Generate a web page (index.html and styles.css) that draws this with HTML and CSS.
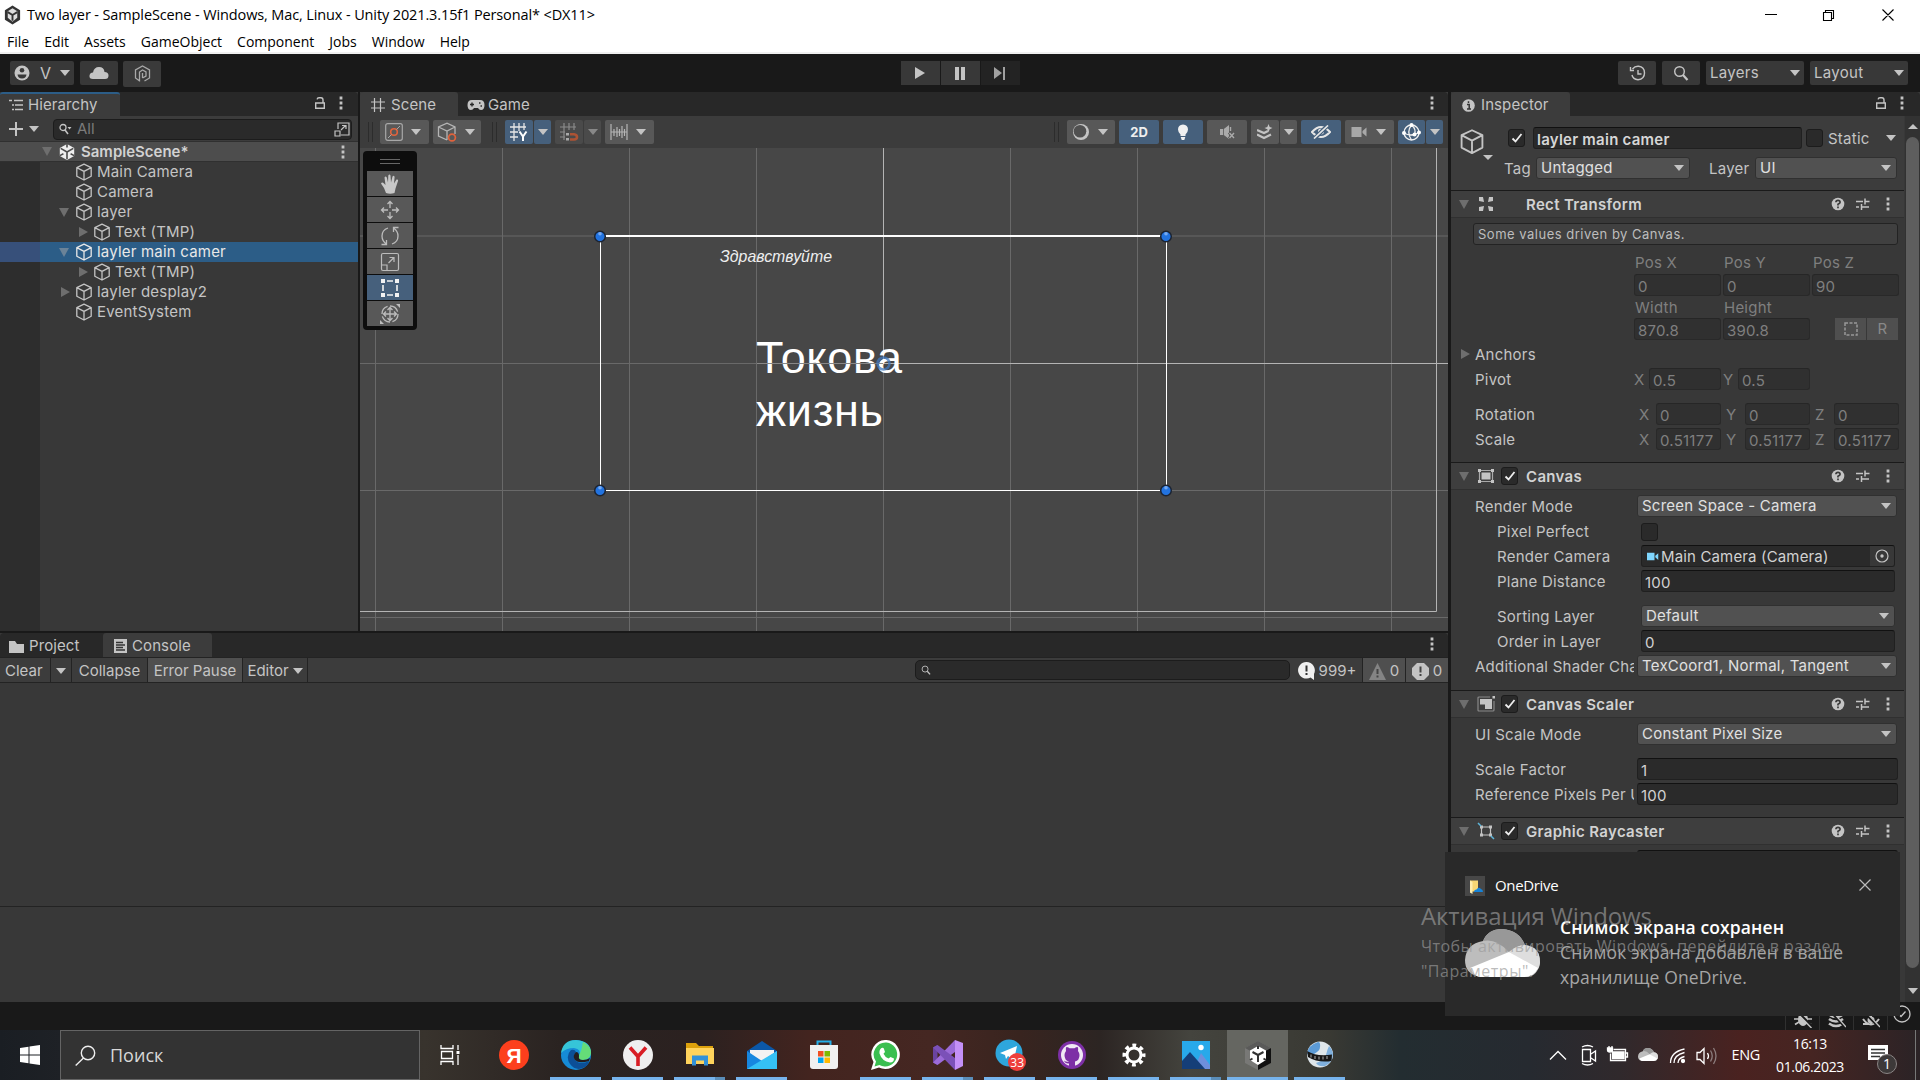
FILE: index.html
```html
<!DOCTYPE html>
<html lang="ru">
<head>
<meta charset="utf-8">
<title>Two layer - SampleScene</title>
<link rel="stylesheet" href="styles.css">
</head>
<body>
<svg class="defs" width="0" height="0">
  <symbol id="cube" viewBox="0 0 18 18"><path d="M9 1.2 16.2 4.6V13.2L9 17 1.8 13.2V4.6ZM1.8 4.6 9 8.4 16.2 4.6M9 8.4V17" fill="none" stroke="currentColor" stroke-width="1.3" stroke-linejoin="round"/></symbol>
  <symbol id="kebab" viewBox="0 0 4 14"><path d="M.6.6h2.8v2.8H.6zM.6 5.6h2.8v2.8H.6zM.6 10.6h2.8v2.8H.6z" fill="currentColor"/></symbol>
  <symbol id="lock" viewBox="0 0 12 14"><path d="M1.7 7h8.6v5.3H1.7zM9 7V4q0-2.2-2-2.2H5q-1.6 0-1.9 1.6" fill="none" stroke="currentColor" stroke-width="1.4"/></symbol>
  <symbol id="help" viewBox="0 0 14 14"><circle cx="7" cy="7" r="6.3" fill="#c4c4c4"/><path d="M4.9 5.3Q5 3.4 7 3.4T9.1 5.2Q9.1 6.3 7 7.3V8.5M7 9.6v1.6" fill="none" stroke="#3a3a3a" stroke-width="1.7"/></symbol>
  <symbol id="preset" viewBox="0 0 14 14"><path d="M0 4.5h7M9.5 4.500h4M9 1.500v6M0 10h3M5 10h8M5.500 7v6" fill="none" stroke="#c4c4c4" stroke-width="1.5"/></symbol>
  <symbol id="mag" viewBox="0 0 16 16"><circle cx="6.500" cy="6.500" r="4.800" fill="none" stroke="currentColor" stroke-width="1.400"/><path d="M10 10 14.500 15" stroke="currentColor" stroke-width="2.200"/></symbol>
  <symbol id="check" viewBox="0 0 12 12"><path d="M1.500 6.500 4.500 9.500 10.500 2" fill="none" stroke="#eee" stroke-width="1.800"/></symbol>
  <symbol id="cam" viewBox="0 0 16 12"><path d="M0 1h10v10H0zM11 5 15 1.500v9L11 7z" fill="currentColor"/></symbol>
  <symbol id="unity" viewBox="0 0 20 20"><path d="M10 1 18 5.500V14.500L10 19 2 14.500V5.500Z" fill="currentColor"/><path d="M10 10V18M10 10 3 6M10 10 17 6M10 1v4M2 14l4-2M18 14l-4-2" stroke="var(--cut,#4d4d4d)" stroke-width="1.800" fill="none"/></symbol>
  <symbol id="cloud" viewBox="0 0 75 48"><path d="M12 47Q0 44 0 31 1 15 18 12 23 0 37 0 54 1 60 16 75 18 75 33 73 47 62 48H15Z" fill="#bdbdbd"/><path d="M18 12Q23 0 37 0 54 1 60 16 52 16 44 23 31 9 18 12Z" fill="#989898"/><path d="M44 23Q52 16 60 16 75 18 75 33 75 38 72 41Z" fill="#dedede"/><path d="M5 39 44 23 73 39Q69 48 59 48H14Q8 46 5 39Z" fill="#fff"/></symbol>
</svg>

<header class="titlebar">
  <svg width="19" height="20" viewBox="0 0 20 20"><path d="M10 0 18 5V15L10 20 2 15V5Z" fill="#333"/><path d="M10 3 15 6V13L10 17 5 13V6Z" fill="#ddd"/><path d="M10 10V16M10 10 5 7M10 10 15 7" stroke="#333" stroke-width="2"/></svg>
  <span class="title-text">Two layer - SampleScene - Windows, Mac, Linux - Unity 2021.3.15f1 Personal* &lt;DX11&gt;</span>
  <svg class="winbtns" width="134" height="14" viewBox="0 0 134 14"><path d="M1 6.500h12M59.500 4.500h8v8h-8zM61.500 4.500v-2h8v8h-2M118.500 1.500l11 11M129.500 1.500l-11 11" fill="none" stroke="#000" stroke-width="1.100"/></svg>
</header>
<nav class="menubar"><span>File</span><span>Edit</span><span>Assets</span><span>GameObject</span><span>Component</span><span>Jobs</span><span>Window</span><span>Help</span></nav>

<div class="toolbar">
  <div class="tb acct"><svg width="16" height="16" viewBox="0 0 16 16"><circle cx="8" cy="8" r="7.500" fill="#c4c4c4"/><circle cx="8" cy="5.200" r="2.300" fill="#383838"/><path d="M3.500 9.500h9q-.5 4-4.500 4t-4.500-4z" fill="#383838"/></svg><span>V</span><i class="tri"></i></div>
  <div class="tb cl"><svg width="20" height="14" viewBox="0 0 20 14"><path d="M4 13Q0 13 .500 9.500 1 6.500 4 6.500 5 1 10 1T15.500 6Q19.500 6 19.500 9.500T16 13Z" fill="#c4c4c4"/></svg></div>
  <div class="tb pl"><svg width="17" height="18" viewBox="0 0 17 18"><path d="M5 15.500 1.500 13V5L8.500 1 15.500 5v8l-5 3M5.500 16.500V7l3-2L12 7v4L8.500 13M8.500 13V8" fill="none" stroke="#a8a8a8" stroke-width="1.300"/></svg></div>
  <div class="play">
    <div class="tb"><svg width="12" height="14"><path d="M0 1 10 7 0 13Z" fill="#c4c4c4"/></svg></div>
    <div class="tb"><svg width="12" height="14"><path d="M0 1h4v13H0zM6 1h4v13H6z" fill="#c4c4c4"/></svg></div>
    <div class="tb dim"><svg width="13" height="14"><path d="M0 1 8 7 0 13ZM9 1h2v13H9z" fill="#a0a0a0"/></svg></div>
  </div>
  <div class="tright">
    <div class="tb w38"><svg width="17" height="16" viewBox="0 0 17 16" fill="none" stroke="#c4c4c4" stroke-width="1.400"><path d="M3.500 4Q6 1 9.500 1.300 15.500 2 15.500 8T9 14.700Q4 14.500 3 10M1.500 2v3.500H5M9 5v4h3.500"/></svg></div>
    <div class="tb w38"><svg width="16" height="16" color="#c4c4c4"><use href="#mag"/></svg></div>
    <div class="tb menu"><span>Layers</span><i class="tri"></i></div>
    <div class="tb menu"><span>Layout</span><i class="tri"></i></div>
  </div>
</div>

<main class="work">
  <div class="left">
    <div class="upper">
      <section class="hier">
        <div class="tabs"><div class="tab active blue"><svg width="14" height="12"><path d="M0 1.500h3M5 1.500h9M3 6h2M6 6h8M3 10.500h2M6 10.500h8" stroke="#c4c4c4" stroke-width="1.300"/></svg><span>Hierarchy</span></div>
          <svg class="r" width="12" height="14" color="#c4c4c4"><use href="#lock"/></svg><svg class="k" width="4" height="14" color="#c4c4c4"><use href="#kebab"/></svg></div>
        <div class="hsearch"><svg width="16" height="16"><path d="M8 1v14M1 8h14" stroke="#c4c4c4" stroke-width="2"/></svg><i class="tri"></i>
          <div class="sfield"><svg width="13" height="12" viewBox="0 0 13 12"><circle cx="4" cy="4.500" r="3" fill="none" stroke="#c4c4c4" stroke-width="1.300"/><path d="M6 7l3 4" stroke="#c4c4c4" stroke-width="1.600"/><path d="M8.500 4h4l-2 2.500z" fill="#c4c4c4"/></svg><span>All</span><svg class="pick" width="16" height="16" viewBox="0 0 16 16" fill="none" stroke="#c4c4c4" stroke-width="1.200"><path d="M4 8V2h11v12H7M1 10h5v5H1zM7 9l4.500-4.500M8 4.500h4V8"/></svg></div></div>
        <div class="tree">
          <div class="hrow scene"><i class="fold open"></i><svg width="17" height="18" color="#eee"><use href="#unity"/></svg><b>SampleScene*</b><svg class="rk" width="4" height="14" color="#c4c4c4"><use href="#kebab"/></svg></div>
          <div class="hrow d1"><i class="fold"></i><svg><use href="#cube"/></svg><span>Main Camera</span></div>
          <div class="hrow d1"><i class="fold"></i><svg><use href="#cube"/></svg><span>Camera</span></div>
          <div class="hrow d1"><i class="fold open"></i><svg><use href="#cube"/></svg><span>layer</span></div>
          <div class="hrow d2"><i class="fold shut"></i><svg><use href="#cube"/></svg><span>Text (TMP)</span></div>
          <div class="hrow d1 sel"><i class="fold open"></i><svg><use href="#cube"/></svg><span>layler main camer</span></div>
          <div class="hrow d2"><i class="fold shut"></i><svg><use href="#cube"/></svg><span>Text (TMP)</span></div>
          <div class="hrow d1"><i class="fold shut"></i><svg><use href="#cube"/></svg><span>layler desplay2</span></div>
          <div class="hrow d1"><i class="fold"></i><svg><use href="#cube"/></svg><span>EventSystem</span></div>
        </div>
      </section>

      <section class="scn">
        <div class="tabs"><div class="tab active sc"><svg width="14" height="14"><path d="M3.500 0v14M9.500 0v14M0 4h14M0 10h14" stroke="#c4c4c4" stroke-width="1.200"/></svg><span>Scene</span></div>
          <div class="tab gm"><svg width="18" height="12" viewBox="0 0 18 12"><path d="M5 1h8q4.500 0 4.500 5T14 11q-2 0-3-2H7q-1 2-3 2-3.500 0-3.500-5T5 1Z" fill="#c4c4c4"/><path d="M3 5.500h4M5 3.500v4M12 4h1.500M13.500 7H15" stroke="#282828" stroke-width="1.400"/></svg><span>Game</span></div>
          <svg class="k" width="4" height="14" color="#c4c4c4"><use href="#kebab"/></svg></div>
        <div class="stools">
          <i class="grip"></i>
          <div class="sb l3" style="width:49px"><svg width="18" height="18" viewBox="0 0 18 18" fill="none"><rect x=".7" y=".7" width="16.600" height="16.600" rx="2" stroke="#a8a8a8" stroke-width="1.200"/><circle cx="9" cy="9" r="3.300" stroke="#e0623c" stroke-width="1.600"/><path d="M3 15l3.500-3.500M11.500 6.500 15 3" stroke="#a8a8a8"/></svg><i class="tri"></i></div>
          <div class="sb l3" style="width:48px;margin-left:4px"><svg width="20" height="20" viewBox="0 0 20 20" fill="none"><path d="M10 18 1.500 14V5L10 1.200 18 5v7M1.500 5 10 9l8-4M10 9v9" stroke="#b5b5b5" stroke-width="1.300"/><circle cx="15" cy="15.500" r="3.400" fill="#585858" stroke="#e0623c" stroke-width="1.700"/></svg><i class="tri"></i></div>
          <i class="grip g2"></i>
          <div class="sb on" style="width:28px;margin-left:8px"><svg width="18" height="18" viewBox="0 0 18 18"><path d="M4 0v18M9 0v8M14 0v7M0 4h16M0 9h8M0 14h8" stroke="#e6e6e6" stroke-width="1.300"/><path d="M9.500 8.500l3.500 5 3.500-5M13 13v5" stroke="#fff" stroke-width="2" fill="none"/></svg></div>
          <div class="sb on dd"><i class="tri"></i></div>
          <div class="sb off" style="width:28px;margin-left:4px"><svg width="19" height="18" viewBox="0 0 19 18"><path d="M4 0v17M9 0v7M14 0v7M0 4h16M0 9h5M0 14h5" stroke="#8b8b8b" stroke-width="1.200"/><path d="M6 10h3v2.500H6zM6 15h3v2.500H6z" fill="#aaa"/><path d="M10 11.200h4q3 .3 3 2.700t-3 2.600h-4" fill="none" stroke="#ad5334" stroke-width="2.600"/></svg></div>
          <div class="sb off dd"><i class="tri"></i></div>
          <div class="sb l3" style="width:49px;margin-left:4px"><svg width="18" height="18"><path d="M1 1v16M17 1v16M4 6v7M7 4v10M9.500 6v7M12 3v12M14.500 6v7M1 9h16" stroke="#b5b5b5" stroke-width="1.200"/></svg><i class="tri"></i></div>
          <i class="grip g3"></i>
          <div class="sb l3" style="width:48px;margin-left:8px"><svg width="18" height="18" viewBox="0 0 18 18"><circle cx="9" cy="9" r="8" fill="#c4c4c4"/><circle cx="8" cy="8.200" r="6.300" fill="#505050"/></svg><i class="tri"></i></div>
          <div class="sb on" style="width:40px;margin-left:4px"><b>2D</b></div>
          <div class="sb on" style="width:40px;margin-left:4px"><svg width="12" height="17" viewBox="0 0 12 17"><path d="M6 .5Q11 1 11 5.500 11 8 8.500 10.500V12h-5v-1.500Q1 8 1 5.500 1 1 6 .5ZM3.700 13h4.600l-1 3H4.700z" fill="#f0f0f0"/></svg></div>
          <div class="sb" style="width:40px;margin-left:4px"><svg width="15" height="14" viewBox="0 0 15 14"><path d="M0 4h3v6H0zM3.800 4 9 0v14L3.800 10z" fill="#aaa"/><path d="M9 7.500l5.500 6M14.500 7.500l-5.500 6" stroke="#585858" stroke-width="3"/><path d="M9.500 8l4.500 5M14 8l-4.500 5M10.500 2v4" stroke="#aaa" stroke-width="1.400"/></svg></div>
          <div class="sb" style="width:28px;margin-left:4px"><svg width="16" height="16" viewBox="0 0 16 16"><path d="M0 6l7 3 4-2M0 10.500l7 3.500 7-3.500" stroke="#c4c4c4" stroke-width="2.200" fill="none"/><path d="M11.500 0l1.200 3 2.800 1-2.800 1.200-1.200 3-1.200-3L7.500 4l2.800-1z" fill="#c4c4c4"/></svg></div>
          <div class="sb dd"><i class="tri"></i></div>
          <div class="sb on" style="width:40px;margin-left:4px"><svg width="20" height="14" viewBox="0 0 20 14"><path d="M1 7q9-10 18 0-9 10-18 0Z" fill="none" stroke="#e6e6e6" stroke-width="2"/><circle cx="10" cy="6.500" r="3" fill="#e6e6e6"/><path d="M3 14 17 0" stroke="#46607c" stroke-width="4"/><path d="M3 13.500 17 .5" stroke="#e6e6e6" stroke-width="1.700"/></svg></div>
          <div class="sb l3" style="width:49px;margin-left:4px"><svg width="17" height="12" color="#a8a8a8"><use href="#cam"/></svg><i class="tri"></i></div>
          <div class="sb on" style="width:27px;margin-left:4px"><svg width="19" height="19" viewBox="0 0 19 19" fill="none" stroke="#f0f0f0" stroke-width="1.300"><circle cx="9.500" cy="9.500" r="7.500"/><path d="M9.500 2Q4 9 9.500 17M9.500 2q5 4 3 9.500M2 10q5 3 10.500 1.500l4.500-2"/><g fill="#fff" stroke="none"><circle cx="9.500" cy="2" r="2"/><circle cx="2" cy="10" r="2"/><circle cx="17" cy="9.500" r="2"/><circle cx="12.500" cy="11.500" r="2"/></g></svg></div>
          <div class="sb on dd"><i class="tri"></i></div>
        </div>
        <div class="view">
          <svg class="canvas" width="1088" height="483" viewBox="360 148 1088 483">
            <rect x="360" y="148" width="1088" height="483" fill="#474747"/>
            <path d="M375.500 148V631M502.500 148V631M629.500 148V631M756.500 148V631M883.500 148V631M1010.500 148V631M1137.500 148V631M1264.500 148V631M1391.500 148V631M360 236H1448M360 363.500H1448M360 490.500H1448M360 617.500H1448" stroke="#696969" fill="none"/>
            <path d="M883.500 148V363.500H1448M360 611.500H1436.500V148" stroke="#b4b4b4" fill="none"/>
            <path d="M600.500 236V490.500H1166.500V236" stroke="#fff" fill="none"/><path d="M600 236H1167" stroke="#fff" stroke-width="2"/>
            <text x="720" y="262" class="hello" textLength="112" lengthAdjust="spacingAndGlyphs">Здравствуйте</text>
            <text x="756" y="373" class="big" textLength="146">Токова</text><text x="756" y="425.500" class="big" textLength="127">жизнь</text>
            <path d="M757 363.500H883" stroke="#888"/>
            <circle cx="883.500" cy="363.500" r="6" fill="none" stroke="#3f77bd" stroke-width="2.500" opacity=".75"/>
            <g fill="#2273e0" stroke="#1c2432" stroke-width="1.500"><circle cx="600" cy="236.500" r="5.300"/><circle cx="1166" cy="236.500" r="5.300"/><circle cx="600" cy="490.500" r="5.300"/><circle cx="1166" cy="490.500" r="5.300"/></g>
            <g fill="#75a9f0"><circle cx="600" cy="233.800" r="1.800"/><circle cx="1166" cy="233.800" r="1.800"/><circle cx="600" cy="487.800" r="1.800"/><circle cx="1166" cy="487.800" r="1.800"/></g>
          </svg>
          <div class="palette">
            <i class="pgrip"></i>
            <div><svg width="20" height="20" viewBox="0 0 20 20"><path d="M6 19 4 14 1 9.500Q2 7.500 4 9.500L5.500 11 4.500 3.500Q5.500 1.500 6.800 3.500L8 8.500 8.300 1.500Q9.500-.5 10.500 1.500L11 8.500 12.500 2.500Q14 1 14.600 3L14 9.500 16.500 5.500Q18.500 5 18 7L15.500 14.500 14.500 19Q10 20.500 6 19Z" fill="#c8c8c8"/></svg></div>
            <div><svg width="20" height="20" viewBox="0 0 20 20" fill="none" stroke="#bcbcbc" stroke-width="1.300"><path d="M10 8V1.500M7.500 4 10 1.500 12.500 4M10 12v6.500M7.500 16l2.500 2.500 2.500-2.500M8 10H1.500M4 7.500 1.500 10 4 12.500M12 10h6.500M16 7.500l2.500 2.500-2.500 2.500"/></svg></div>
            <div><svg width="20" height="20" viewBox="0 0 20 20" fill="none" stroke="#bcbcbc" stroke-width="1.300"><path d="M8 2Q2 4 2 10q0 5 4.500 8M1.500 18.500h5V14M12 18q6-2 6-8 0-5-4.500-8M18.500 1.500h-5V6"/></svg></div>
            <div><svg width="20" height="20" viewBox="0 0 20 20" fill="none" stroke="#bcbcbc" stroke-width="1.200"><rect x="1.500" y="1.500" width="17" height="17" rx="1.500"/><path d="M1.500 13h5.500v5.500M8.500 11 14 5.500M9.500 5.500H14V10"/></svg></div>
            <div class="on"><svg width="20" height="20" viewBox="0 0 20 20"><path d="M1 1h4v4H1zM15 1h4v4h-4zM1 15h4v4H1zM15 15h4v4h-4z" fill="#f2f2f2"/><path d="M7 3h6M7 17h6M3 7v6M17 7v6" stroke="#f2f2f2" stroke-width="1.600"/></svg></div>
            <div><svg width="20" height="20" viewBox="0 0 20 20" fill="none" stroke="#bcbcbc" stroke-width="1.300"><circle cx="10" cy="10" r="8" stroke-dasharray="10 2.500"/><path d="M10 3.500v13M3.500 10h13M7.500 6 10 3.500 12.500 6M7.500 14l2.500 2.500 2.500-2.500M6 7.500 3.500 10 6 12.500M14 7.500l2.500 2.500-2.500 2.500"/><path d="M16 0h4v4zM0 16v4h4z" fill="#bcbcbc" stroke="none"/></svg></div>
          </div>
        </div>
      </section>
    </div>

    <section class="console">
      <div class="tabs"><div class="tab pj"><svg width="15" height="13"><path d="M0 1h6l2 3h7v9H0z" fill="#c4c4c4"/></svg><span>Project</span></div>
        <div class="tab active cn"><svg width="13" height="14"><path d="M0 0h13v14H0z" fill="#c4c4c4"/><path d="M2 3.500h7M2 6h9M2 8.500h7M2 11h9" stroke="#333" stroke-width="1.300"/></svg><span>Console</span></div>
        <svg class="k" width="4" height="14" color="#c4c4c4"><use href="#kebab"/></svg></div>
      <div class="cbar">
        <span class="clr">Clear</span><span class="c" style="width:21px"><i class="tri"></i></span><span class="c" style="width:76px">Collapse</span><span class="c lit" style="width:95px">Error Pause</span><span class="c" style="width:65px">Editor<i class="tri e"></i></span>
        <div class="csearch"><svg width="10" height="10" color="#c4c4c4" viewBox="0 0 16 16"><use href="#mag"/></svg></div>
        <span class="c cnt" style="width:71px"><svg width="17" height="18" viewBox="0 0 17 18"><path d="M8.500 0a8.300 8.300 0 1 0 4 15.500L16 18V12A8.300 8.300 0 0 0 8.500 0Z" fill="#f0f0f0"/><path d="M8.500 3.500v6M8.500 11v2" stroke="#333" stroke-width="2"/></svg>999+</span>
        <span class="c cnt lit" style="width:43px"><svg width="17" height="17" viewBox="0 0 17 17"><path d="M8.500 0 17 17H0Z" fill="#848484"/><path d="M8.500 6v5M8.500 12.500v2" stroke="#444" stroke-width="2"/></svg>0</span>
        <span class="c cnt lit" style="width:42px"><svg width="17" height="17" viewBox="0 0 17 17"><path d="M5 0h7l5 5v7l-5 5H5l-5-5V5z" fill="#c4c4c4"/><path d="M8.500 3.500v6M8.500 11v2" stroke="#444" stroke-width="2"/></svg>0</span>
      </div>
      <div class="log"></div><div class="detail"></div>
    </section>
  </div>

  <section class="insp">
    <div class="tabs"><div class="tab active in"><svg width="13" height="13" viewBox="0 0 13 13"><circle cx="6.500" cy="6.500" r="6.300" fill="#c4c4c4"/><path d="M5 5.500h2.200V10M5 10h4M6.500 2.200v1.800" stroke="#333" stroke-width="1.500" fill="none"/></svg><span>Inspector</span></div>
      <svg class="r" width="12" height="14" color="#c4c4c4"><use href="#lock"/></svg><svg class="k" width="4" height="14" color="#c4c4c4"><use href="#kebab"/></svg></div>
    <div class="ibody">
      <div class="props">
        <div class="ohead">
          <div class="oicon"><svg width="26" height="27" color="#c4c4c4" viewBox="0 0 18 18"><use href="#cube"/></svg><i class="tri"></i></div>
          <div class="ofields">
            <div class="o1"><i class="cb"><svg><use href="#check"/></svg></i><div class="field name">layler main camer</div><i class="cb"></i><span>Static</span><i class="tri"></i></div>
            <div class="o2"><span class="tag">Tag</span><div class="drop" style="width:154px">Untagged<i class="tri"></i></div><span class="lay">Layer</span><div class="drop" style="width:142px">UI<i class="tri"></i></div></div>
          </div>
        </div>

        <div class="chead"><i class="fold open"></i><svg class="ci" width="16" height="16" viewBox="0 0 16 16" fill="#c4c4c4"><path d="M1 1h4l1 5-5-1zM15 1h-4l-1 5 5-1zM1 15h4l1-5-5 1zM15 15h-4l-1-5 5 1z"/></svg><i class="nocb"></i><b>Rect Transform</b><svg class="h1"><use href="#help"/></svg><svg><use href="#preset"/></svg><svg class="kb" color="#c4c4c4"><use href="#kebab"/></svg></div>
        <div class="helpbox">Some values driven by Canvas.</div>
        <div class="vec lab"><span>Pos X</span><span>Pos Y</span><span>Pos Z</span></div>
        <div class="vec"><div class="field dis">0</div><div class="field dis">0</div><div class="field dis">90</div></div>
        <div class="vec lab l2"><span>Width</span><span>Height</span></div>
        <div class="vec"><div class="field dis">870.8</div><div class="field dis">390.8</div><div class="rbtns"><b><svg width="14" height="14"><rect x="1" y="1" width="12" height="12" fill="none" stroke="#999" stroke-width="1.500" stroke-dasharray="3 1.500"/></svg></b><b>R</b></div></div>
        <div class="row anch"><i class="fold shut"></i><label>Anchors</label></div>
        <div class="row"><label>Pivot</label><div class="tri3 a15"><span>X</span><div class="field dis">0.5</div><span>Y</span><div class="field dis">0.5</div></div></div>
        <div class="row gap"><label>Rotation</label><div class="tri3 a22"><span>X</span><div class="field dis">0</div><span>Y</span><div class="field dis">0</div><span>Z</span><div class="field dis">0</div></div></div>
        <div class="row"><label>Scale</label><div class="tri3 a22"><span>X</span><div class="field dis">0.51177</div><span>Y</span><div class="field dis">0.51177</div><span>Z</span><div class="field dis">0.51177</div></div></div>

        <div class="chead mt9"><i class="fold open"></i><svg class="ci" width="18" height="16" viewBox="0 0 18 16"><path d="M2.500 2.500h13v11h-13z" fill="none" stroke="#aaa" stroke-width="1.200"/><path d="M4.500 4.500h9v7h-9z" fill="#c4c4c4"/><path d="M1 1h3v3H1zM14 1h3v3h-3zM1 12h3v3H1zM14 12h3v3h-3z" fill="#c4c4c4"/></svg><i class="cb"><svg><use href="#check"/></svg></i><b>Canvas</b><svg class="h1"><use href="#help"/></svg><svg><use href="#preset"/></svg><svg class="kb" color="#c4c4c4"><use href="#kebab"/></svg></div>
        <div class="row first"><label>Render Mode</label><div class="drop wide">Screen Space - Camera<i class="tri"></i></div></div>
        <div class="row ind"><label>Pixel Perfect</label><i class="cb"></i></div>
        <div class="row ind"><label>Render Camera</label><div class="field obj"><svg width="12" height="9" color="#7fd6fd" viewBox="0 0 16 12"><use href="#cam"/></svg><span>Main Camera (Camera)</span><em><svg width="14" height="14"><circle cx="7" cy="7" r="6" fill="none" stroke="#c4c4c4" stroke-width="1.200"/><circle cx="7" cy="7" r="1.700" fill="#c4c4c4"/></svg></em></div></div>
        <div class="row ind"><label>Plane Distance</label><div class="field">100</div></div>
        <div class="row ind gap"><label>Sorting Layer</label><div class="drop">Default<i class="tri"></i></div></div>
        <div class="row ind"><label>Order in Layer</label><div class="field">0</div></div>
        <div class="row"><label>Additional Shader Channels</label><div class="drop wide">TexCoord1, Normal, Tangent<i class="tri"></i></div></div>

        <div class="chead mt10"><i class="fold open"></i><svg class="ci" width="18" height="16" viewBox="0 0 18 16"><path d="M17 5v9q0 1-1 1H2q-1 0-1-1V2q0-1 1-1h11" fill="none" stroke="#888" stroke-width="1.200"/><path d="M3 3h12v10H8V8.500H3z" fill="#c4c4c4"/><path d="M15.500 0H18v2.500h-2.500z" fill="#c4c4c4"/></svg><i class="cb"><svg><use href="#check"/></svg></i><b>Canvas Scaler</b><svg class="h1"><use href="#help"/></svg><svg><use href="#preset"/></svg><svg class="kb" color="#c4c4c4"><use href="#kebab"/></svg></div>
        <div class="row first"><label>UI Scale Mode</label><div class="drop wide">Constant Pixel Size<i class="tri"></i></div></div>
        <div class="row gap"><label>Scale Factor</label><div class="field fw">1</div></div>
        <div class="row"><label>Reference Pixels Per Unit</label><div class="field fw">100</div></div>

        <div class="chead mt9"><i class="fold open"></i><svg class="ci" width="18" height="18" viewBox="0 0 18 18"><path d="M4.500 5h9v8h-9z" fill="none" stroke="#c4c4c4" stroke-width="1.200"/><path d="M3 3.500h3v3H3zM12 3.500h3v3h-3zM3 11.500h3v3H3zM12 11.500h3v3h-3z" fill="#c4c4c4"/><path d="M1 1l3 3M14 14l3 3" stroke="#5db5d9" stroke-width="1.500"/></svg><i class="cb"><svg><use href="#check"/></svg></i><b>Graphic Raycaster</b><svg class="h1"><use href="#help"/></svg><svg><use href="#preset"/></svg><svg class="kb" color="#c4c4c4"><use href="#kebab"/></svg></div>
        <div class="row first"><label></label><div class="field fw"></div></div>
      </div>
      <div class="scroll"><i class="up"></i><div class="thumb"></div><i class="tri"></i></div>
    </div>
  </section>
</main>

<footer class="status">
  <span><svg width="18" height="18" viewBox="0 0 18 18"><ellipse cx="9" cy="9.500" rx="5" ry="6.500" fill="#c4c4c4"/><path d="M0 9h18M1 14.500 5 12M17 14.500 13 12M2 3l4 3M16 3l-4 3" stroke="#c4c4c4" stroke-width="1.700"/><path d="M2 0l17 17" stroke="#191919" stroke-width="2"/><path d="M.5 1l17 17" stroke="#c4c4c4" stroke-width="1.400"/></svg></span>
  <span><svg width="18" height="18" viewBox="0 0 18 18"><path d="M1 9q7 5 14 0M1 13.500q7 5 14 0M1 4.500q7 5 14 0" fill="none" stroke="#c4c4c4" stroke-width="2.600"/><path d="M3 2l14 15" stroke="#191919" stroke-width="2.500"/><path d="M5 2l13 15" stroke="#c4c4c4" stroke-width="1.300"/></svg></span>
  <span><svg width="18" height="18" viewBox="0 0 18 18"><path d="M1 9q8 11 16 0M9 4v10M1 14h4" fill="none" stroke="#c4c4c4" stroke-width="2"/><circle cx="9" cy="10" r="3.500" fill="#c4c4c4"/><path d="M2 2l15 15" stroke="#191919" stroke-width="2.500"/><path d="M4 2l14 15" stroke="#c4c4c4" stroke-width="1.300"/></svg></span>
  <span class="ok"><svg width="18" height="18" viewBox="0 0 18 18" fill="none" stroke="#c4c4c4" stroke-width="1.300"><circle cx="9" cy="9" r="8"/><path d="M5.500 9 8 11.500 12.500 6.500"/></svg></span>
</footer>

<div class="taskbar">
  <div class="start"><svg width="20" height="20" viewBox="0 0 20 20" fill="#fff"><path d="M0 3 8.500 1.800V9.500H0zM9.500 1.600 20 0V9.500H9.500zM0 10.500H8.500V18.200L0 17zM9.500 10.500H20V20L9.500 18.400z"/></svg></div>
  <div class="find"><svg width="21" height="21" viewBox="0 0 21 21" fill="none" stroke="#eee" stroke-width="1.400"><circle cx="13" cy="8" r="6.700"/><path d="M8.500 13 .700 20.500"/></svg><span>Поиск</span></div>
  <div class="app tv"><svg width="21" height="20" viewBox="0 0 21 20" fill="none" stroke="#fff" stroke-width="1.300"><path d="M1 0v3.500h12V0M1 20v-3.500h12V20M1.500 6.500h11v7h-11zM18 0v5M18 10v10"/><path d="M16.500 6h3v3h-3z" fill="#fff" stroke="none"/></svg></div>
  <div class="app"><svg width="30" height="30" viewBox="0 0 30 30"><circle cx="15" cy="15" r="15" fill="#fc3f1d"/><text x="7.500" y="23" class="ya">Я</text></svg></div>
  <div class="app run"><svg width="30" height="30" viewBox="0 0 30 30"><circle cx="15" cy="15" r="15" fill="#168bd6"/><path d="M0 13Q2 0 15 0 30 1 30 13 29 20 22 20 16 20 18 16 21 9 13 8 5 8 0 13Z" fill="#36c5d8"/><path d="M22 2Q30 6 30 13 29 20 22 20 17 20 17.500 17 21 10 22 2Z" fill="#65dc78"/><path d="M10 10Q4 16 9 24 15 32 24 27 28 24 28 21 20 25 15 21 11 17 15 12 14 9 10 10Z" fill="#0c4f97"/><path d="M15 12Q11 16 14 20 18 24 28 21L29 18Q26 20 22 20 17 20 18 16 18 12 15 12Z" fill="#241d1f"/></svg></div>
  <div class="app run"><svg width="30" height="30" viewBox="0 0 30 30"><circle cx="15" cy="15" r="15" fill="#efefef"/><path d="M7 7.500 15 16.500 23 7.500M15 16v10" stroke="#d81d24" stroke-width="3.600" fill="none"/></svg></div>
  <div class="app run stack"><svg width="30" height="28" viewBox="0 0 30 28"><path d="M1 2h10l3 3h14v6H1z" fill="#dca10c"/><path d="M1 7h28v16H1z" fill="#ffd35c"/><path d="M7 24.500v-10h16v10h-4v-5h-8v5z" fill="#3291d8"/></svg></div>
  <div class="app run"><svg width="30" height="28" viewBox="0 0 30 28"><path d="M0 10 15 0 30 10V15H0z" fill="#0b57a8"/><path d="M3 9h24v14H3z" fill="#f2f2f2"/><path d="M0 10 15 20 30 10V28H0z" fill="#1787df"/><path d="M0 28 30 10V28z" fill="#35c1f5"/></svg></div>
  <div class="app"><svg width="30" height="30" viewBox="0 0 30 30"><path d="M8.500 7V1.500h13V7" fill="none" stroke="#25aee8" stroke-width="2"/><path d="M1 5h28v21q0 3-3 3H4q-3 0-3-3z" fill="#f0f0f0"/><path d="M9 11h5.500v5.500H9z" fill="#f25022"/><path d="M15.500 11H21v5.500h-5.500z" fill="#7fba00"/><path d="M9 17.500h5.500V23H9z" fill="#00a4ef"/><path d="M15.500 17.500H21V23h-5.500z" fill="#ffb900"/></svg></div>
  <div class="app run"><svg width="30" height="30" viewBox="0 0 30 30"><path d="M15.500 0A14.500 14.500 0 1 1 8 27.500L0 30 2.500 22A14.500 14.500 0 0 1 15.500 0Z" fill="#fff"/><path d="M15.500 2.500A12 12 0 1 1 8.500 25L3.500 26.500 5 21.500A12 12 0 0 1 15.500 2.500Z" fill="#3abf50"/><path d="M10.500 8q2-1 2.500 1l1 3-1.500 1.800q1.500 3.500 5 4.700L19.500 17l3.500 1.500q0 4-4 4-8-1-10.500-9-.5-4 2-5.500Z" fill="#fff"/></svg></div>
  <div class="app run stack"><svg width="31" height="30" viewBox="0 0 31 30"><path d="M0 7.500 4.500 5V25L0 22.500Z" fill="#6a44a0"/><path d="M4.500 25 22 12V0L0 22.500Z" fill="#9c6bd8"/><path d="M4.500 5 22 18V30L0 7.500Z" fill="#7b51b8"/><path d="M22 0 30 3V26L22 30Z" fill="#c490f7"/></svg></div>
  <div class="app run"><svg width="32" height="32" viewBox="0 0 32 32"><circle cx="15" cy="14" r="13.500" fill="#2ea6dc"/><path d="M6 14 23 7 20 21 14 17 12 20 11 16z" fill="#fff"/><circle cx="23" cy="23" r="9" fill="#ee3f3c"/><text x="16.300" y="27.500" class="badge">33</text></svg></div>
  <div class="app run"><svg width="28" height="28" viewBox="0 0 28 28"><circle cx="14" cy="14" r="14" fill="#7d2fa6"/><circle cx="14" cy="14" r="11" fill="#f0e9f4"/><path d="M11 26v-3.500q-4 .5-5-3 2.500 2 5 1-4.500-1-4.500-6.500 0-2 1.500-4-.5-2.500.3-4Q10 6 11.500 7.300h5Q18 6 19.700 6q.8 1.500.3 4 1.500 2 1.500 4 0 5.500-4.500 6.500V26z" fill="#7d2fa6"/></svg></div>
  <div class="app run"><svg width="26" height="26" viewBox="0 0 26 26"><circle cx="13" cy="13" r="9.700" fill="none" stroke="#fff" stroke-width="3.600" stroke-dasharray="3.800 3.818" stroke-dashoffset="1.900"/><circle cx="13" cy="13" r="7" fill="none" stroke="#fff" stroke-width="3"/></svg></div>
  <div class="app run stack"><svg width="28" height="28" viewBox="0 0 28 28"><path d="M0 0h28v28H0z" fill="#28a9ea"/><circle cx="19" cy="6.500" r="2.700" fill="#fff"/><path d="M12 28 19 12 28 24v4z" fill="#6e8fdb"/><path d="M0 20 8 11 23 28H0z" fill="#153e78"/></svg></div>
  <div class="app run cur"><svg width="28" height="29" viewBox="0 0 28 29"><path d="M14 0 27 7V22L14 29 1 22V7Z" fill="#787876"/><path d="M14 0 27 7 14 14 1 7Z" fill="#5a5a59"/><path d="M27 7V22L14 29V14Z" fill="#111"/><path d="M14 5 22 9.500V19L14 24 6 19V9.500Z" fill="#fff"/><path d="M14 14v7M14 14 8.500 11M14 14l5.500-3M14 5v3M6 19l2.500-1.500M22 19l-2.500-1.500" stroke="#333" stroke-width="2"/></svg></div>
  <div class="app run"><svg width="30" height="30" viewBox="0 0 30 30"><circle cx="15" cy="14.500" r="13" fill="#dfe6ea"/><path d="M13 2Q3 5 2 14q6 2 10-2 4-3 3-8Q15 2 13 2Z" fill="#5c9bd6"/><path d="M24 6q4 4 4 9-1 8-8 11-6 1-9-3 9-3 10-8 1-5 3-9Z" fill="#7fb0dd"/><path d="M2 11Q12 17 27 14.500L26.500 21Q13 23 3 17Z" fill="#171717"/><path d="M6 14.500v3M10 16v3M14 16.500v3M18 16.500v3M22 16v3" stroke="#8c8c8c" stroke-width="1.300"/></svg></div>
  <div class="tray">
    <svg width="276" height="30" viewBox="1546 1040 276 30" fill="none" stroke="#fff" stroke-width="1.300"><path d="M1551 1059.500l8-8 8 8"/><path d="M1583.500 1049.500h8v12h-8zM1592 1054l4.500-3v10l-4.500-3M1583 1047q5.500-3 11 0M1583 1063.500q5.500 3 11 0"/><path d="M1614.500 1049.500h12v11h-15v-7M1627 1053h1.500v4H1627M1610 1048v-2M1613 1048v-2"/><path d="M1608.500 1048h5v2q0 2-2.500 2t-2.500-2zM1613.500 1052h11.500v6.500h-11.500z" fill="#fff"/><path d="M1671.500 1063q0-11 14-14M1675 1063q0-8 10.500-10.500M1679 1063q0-5 6.500-6.500"/><circle cx="1684" cy="1061" r="1.500" fill="#fff"/><path d="M1698 1052.500h3l4-4v15l-4-4h-3zM1708.500 1053q2 3 0 6"/><path d="M1711.500 1050.500q3.500 5.500 0 11M1714.500 1048q5 8 0 16" stroke="#8c7d7d"/></svg>
    <span class="eng">ENG</span>
    <div class="clock"><span>16:13</span><span>01.06.2023</span></div>
    <div class="note"><svg width="21" height="18"><path d="M0 0h20v15h-5v3l-4-3H0z" fill="#fff"/><path d="M3 4.500h14M3 8h14M3 11.500h9" stroke="#333" stroke-width="1.300"/></svg><b>1</b></div>
  </div>
  <svg class="traycloud" width="20" height="13" viewBox="0 0 75 48" preserveAspectRatio="none"><use href="#cloud"/></svg>
  <i class="peek"></i>
</div>

<aside class="toast">
  <div class="thead"><svg width="20" height="20" viewBox="0 0 20 20"><path d="M0 0h20v20H0z" fill="#474747"/><path d="M5 4.500h8v11H7l-2 1z" fill="#f7d774"/><path d="M5 4.500 7.500 6v12L5 16.500z" fill="#ffeeb0"/><path d="M9 16q0-2.500 2.500-2.500 2-3 4.500-.5 2 .5 2 3z" fill="#1683d8"/></svg><span>OneDrive</span><svg class="x" width="12" height="12"><path d="M.5.5l11 11M11.500.5l-11 11" stroke="#bbb" stroke-width="1.200"/></svg></div>
  <div class="tbody"><svg width="75" height="48"><use href="#cloud"/></svg><div><b>Снимок экрана сохранен</b><p>Снимок экрана добавлен в ваше</p><p>хранилище OneDrive.</p></div></div>
</aside>
<svg class="water" width="430" height="80" viewBox="1420 900 430 80"><text x="1421" y="925" class="w1" textLength="231">Активация Windows</text><text x="1421" y="952" class="w2" textLength="419">Чтобы активировать Windows, перейдите в раздел</text><text x="1421" y="977" class="w2" textLength="112">"Параметры".</text></svg>
</body>
</html>
```

FILE: styles.css
```css
* { box-sizing: border-box; }
body { margin: 0; width: 1920px; height: 1080px; overflow: hidden; position: relative; display: flex; flex-direction: column; background: #191919; color: #c4c4c4; font: 15px/20px Inter, "Liberation Sans", sans-serif; }
svg { flex: none; display: block; }
i, em { font-style: normal; flex: none; }
.defs { position: absolute; }
.tri { width: 0; height: 0; border: 5px solid transparent; border-top: 6px solid #c4c4c4; border-bottom: 0; }

.titlebar { height: 29px; background: #fff; color: #000; display: flex; align-items: center; padding-left: 3px; font: 14.500px "Open Sans", sans-serif; }
.title-text { margin-left: 5px; letter-spacing: -.12px; white-space: nowrap; }
.winbtns { margin: 0 22px 0 auto; }
.menubar { height: 25px; background: #fff; border-bottom: 2px solid #f0f0f0; color: #000; display: flex; gap: 15px; padding-left: 7px; font: 14px/25px "Open Sans", sans-serif; }

.toolbar { height: 38px; display: flex; align-items: flex-start; padding: 7px 12px 0 10px; }
.tb { height: 24px; background: #383838; display: flex; align-items: center; justify-content: center; border-radius: 2px; color: #c4c4c4; }
.acct { width: 64px; gap: 10px; font-size: 16px; }
.acct .tri { margin-left: -1px; }
.cl { width: 38px; margin-left: 6px; }
.pl { width: 38px; height: 26px; margin-left: 5px; background: #3a3a3a; }
.play { display: flex; gap: 1px; margin-left: 740px; }
.play .tb { width: 39px; border-radius: 0; }
.play .dim { background: #232323; }
.tright { margin-left: auto; display: flex; gap: 6px; }
.w38 { width: 38px; }
.menu { width: 98px; justify-content: space-between; padding: 0 4px; letter-spacing: .3px; }

.work { height: 910px; display: flex; gap: 3px; }
.left { width: 1448px; display: flex; flex-direction: column; gap: 2px; }
.upper { height: 539px; display: flex; gap: 2px; }
.hier { width: 358px; background: #383838; display: flex; flex-direction: column; }
.scn { width: 1088px; display: flex; flex-direction: column; background: #3c3c3c; }
.tabs { height: 24px; background: #282828; display: flex; align-items: center; border-radius: 4px 4px 0 0; letter-spacing: .1px; }
.tab { height: 24px; display: flex; align-items: center; border-radius: 3px 3px 0 0; padding-top: 2px; }
.active { background: #3c3c3c; }
.blue { width: 120px; border-top: 2px solid #2c5d87; padding: 0 0 0 9px; gap: 5px; }
.sc { width: 98px; padding-left: 11px; gap: 6px; }
.gm { padding-left: 9px; gap: 3px; }
.in { width: 119px; padding-left: 11px; gap: 6px; }
.pj { width: 103px; padding-left: 9px; gap: 5px; }
.cn { width: 109px; padding-left: 11px; gap: 5px; }
.tabs .k { margin: -2px 14px 0 auto; }
.tabs .r { margin: -3px 0 0 auto; }
.tabs .r + .k { margin: -2px 15px 0 13px; }
.insp .tabs .r + .k { margin-right: 16px; }

.hsearch { height: 25px; background: #3c3c3c; display: flex; align-items: center; padding: 1px 6px 0 8px; }
.hsearch > .tri { margin: 0 14px 0 5px; }
.sfield { flex: 1; height: 21px; background: #2a2a2a; border: 1px solid #1c1c1c; border-radius: 4px; display: flex; align-items: center; padding-left: 5px; color: #7b7b7b; gap: 5px; }
.sfield .pick { margin: 0 1px 0 auto; }
.tree { flex: 1; background: linear-gradient(90deg, #2d2d2d 40px, #383838 40px); }
.hrow { height: 20px; display: flex; align-items: center; letter-spacing: .2px; }
.hrow svg { width: 18px; height: 18px; margin-right: 4px; }
.fold { width: 12px; margin-right: 4px; }
.fold.open::before, .fold.shut::before { content: ""; display: block; width: 0; height: 0; }
.open::before { border: 5.500px solid transparent; border-top: 9px solid #6e6e6e; border-bottom: 0; }
.shut::before { border: 5.500px solid transparent; border-left: 9px solid #6e6e6e; border-right: 0; margin-left: 2px; }
.scene { height: 21px; background: #4d4d4d; border: solid #303030; border-width: 1px 0; padding-left: 42px; letter-spacing: 0; }
.scene svg:first-of-type { margin-right: 5px; }
.scene .rk { width: 4px; height: 14px; margin: 0 13px 0 auto; }
.scene b { font-weight: 600; color: #d2d2d2; }
.d1 { padding-left: 59px; }
.d2 { padding-left: 77px; }
.sel { background: linear-gradient(90deg, #37507a 40px, #2c5d87 40px); color: #e8e8e8; }
.sel .open::before { border-top-color: #6b8398; }

.stools { height: 32px; display: flex; align-items: center; padding-left: 8px; }
.grip { width: 5px; height: 20px; border: solid #2c2c2c; border-width: 0 1px; margin-right: 7px; }
.g2 { margin: 0 0 0 11px; }
.g3 { margin: 0 0 0 400px; }
.sb { height: 24px; background: #585858; border-radius: 2px; display: flex; align-items: center; justify-content: center; gap: 8px; flex: none; }
.sb b { font-weight: 700; font-size: 13px; color: #eee; }
.l3 { padding-right: 3px; }
.on { background: #46607c; }
.off { background: #4a4a4a; }
.off .tri { border-top-color: #888; }
.dd { width: 17px; margin-left: 1px; }
.view { height: 483px; position: relative; }
.big { font: 45px "Liberation Sans", sans-serif; fill: #fff; }
.hello { font: italic 17px "Liberation Sans", sans-serif; fill: #eee; }
.palette { position: absolute; left: 3px; top: 3px; width: 54px; height: 179px; background: #0d0d0d; border-radius: 4px; padding: 0 4px; display: flex; flex-direction: column; gap: 1px; }
.palette div { height: 25px; background: #585858; display: flex; align-items: center; justify-content: center; }
.palette .on { background: #46607c; }
.pgrip { height: 5px; width: 20px; margin: 8px auto 6px; border: solid #666; border-width: 1px 0; }

.console { flex: 1; background: #383838; display: flex; flex-direction: column; }
.cbar { height: 26px; background: #3c3c3c; border: solid #232323; border-width: 1px 0; display: flex; align-items: stretch; }
.cbar span { display: flex; align-items: center; border-right: 1px solid #232323; white-space: nowrap; flex: none; padding-top: 2px; }
.cbar .c { justify-content: center; }
.cbar .clr { width: 51px; padding-left: 5px; }
.cbar .e { margin-left: 4px; }
.lit { background: #4f4f4f; }
.cnt { gap: 4px; }
.cbar .cnt:last-child { border-right: 0; }
.csearch { width: 375px; height: 20px; margin: 2px 2px 0 auto; background: #2a2a2a; border: 1px solid #1c1c1c; border-radius: 5px; display: flex; align-items: center; padding-left: 5px; }
.log { height: 223px; }
.detail { flex: 1; border-top: 1px solid #232323; }

.insp { width: 469px; background: #383838; display: flex; flex-direction: column; }
.ibody { height: 886px; display: flex; }
.props { width: 453px; letter-spacing: .24px; overflow: hidden; }
.scroll { flex: 1; margin-left: 1px; background: #323232; display: flex; flex-direction: column; align-items: center; padding: 8px 0; }
.up { border: 5px solid transparent; border-bottom: 5px solid #c4c4c4; border-top: 0; }
.thumb { width: 13px; height: 833px; background: #5e5e5e; border-radius: 7px; margin: 8px 0 20px; }
.ohead { height: 74px; background: #3c3c3c; display: flex; }
.oicon { width: 57px; padding: 12px 0 0 8px; }
.oicon .tri { display: block; margin: 0 0 0 24px; border-top-width: 5px; }
.o1, .o2 { display: flex; align-items: center; }
.o1 { padding-top: 11px; }
.o1 .name { width: 269px; margin: 0 4px 0 8px; font-weight: 600; color: #d6d6d6; line-height: 23px; }
.o1 span { margin: 0 16px 0 5px; padding-top: 1px; }
.o2 { padding-top: 8px; margin-left: -4px; }
.o2 > span { padding-top: 2px; }
.tag { width: 32px; }
.lay { width: 46px; margin-left: 19px; }
.cb { width: 17px; height: 18px; background: #2a2a2a; border: 1px solid #1c1c1c; border-radius: 3px; display: flex; align-items: center; justify-content: center; }
.cb svg { width: 12px; height: 12px; }
.field { height: 22px; background: #2a2a2a; border: 1px solid #202020; border-top-color: #111; border-radius: 3px; padding-left: 3px; line-height: 23px; color: #d2d2d2; white-space: nowrap; overflow: hidden; }
.dis { background: #303030; border-color: #292929; border-top-color: #262626; color: #7f7f7f; }
.drop { height: 22px; background: #515151; border: 1px solid #303030; border-radius: 3px; padding: 0 5px 0 4px; line-height: 20px; color: #e0e0e0; display: flex; align-items: center; justify-content: space-between; }
.chead { height: 28px; background: #3e3e3e; border-top: 1px solid #1a1a1a; border-bottom: 1px solid #303030; display: flex; align-items: center; padding-left: 8px; }
.chead .fold { margin: 0; }
.ci { width: 18px; margin: 0 6px 0 6px; }
.nocb { width: 17px; }
.chead b { margin-left: 8px; font-weight: 600; color: #d2d2d2; letter-spacing: .33px; padding-top: 2px; }
.chead .h1 { margin-left: auto; }
.chead .h1, .chead .h1 + svg { width: 14px; height: 14px; }
.chead .h1 + svg { margin: 0 16px 0 11px; }
.kb { width: 4px; height: 14px; margin-right: 14px; }
.mt9 { margin-top: 9px; }
.mt10 { margin-top: 10px; }
.helpbox { margin: 5px 6px 0 22px; height: 22px; border: 1px solid #232323; border-radius: 3px; background: #404040; padding-left: 4px; font-size: 13px; line-height: 21px; letter-spacing: .5px; color: #bdbdbd; }
.vec { display: grid; grid-template-columns: repeat(3, 87px); gap: 2px; margin-left: 183px; height: 22px; }
.lab { margin-top: 7px; color: #7f7f7f; line-height: 21px; padding-left: 1px; }
.lab.l2 { margin-top: 2px; height: 20px; line-height: 20px; }
.rbtns { display: flex; gap: 1px; margin: 0 1px 0 23px; }
.rbtns b { flex: 1; background: #4f4f4f; color: #888; font-weight: 400; display: flex; align-items: center; justify-content: center; }
.row { height: 25px; display: flex; align-items: flex-start; padding-left: 24px; }
.row label { width: 159px; line-height: 24px; white-space: nowrap; overflow: hidden; flex: none; }
.ind { padding-left: 46px; }
.ind label { width: 137px; }
.ind .field, .ind .drop { width: 254px; margin-left: 7px; }
.ind .cb { margin: 3px 0 0 7px; }
.wide { width: 260px; margin-left: 3px; }
.fw { width: 261px; margin-left: 3px; }
.gap { margin-top: 10px; }
.first { margin-top: 5px; }
.anch { margin-top: 3px; padding-left: 8px; }
.anch .fold { margin: 6px 4px 0 0; }
.tri3 { display: grid; column-gap: 0; color: #7f7f7f; line-height: 24px; }
.a15 { grid-template-columns: 15px 72px 17px 72px; }
.a22 { grid-template-columns: 22px 65px 24px 65px 24px 65px; }
.a22 span { padding-left: 5px; }
.a15 span:nth-of-type(2) { padding-left: 2px; }
.obj { display: flex; align-items: center; padding-left: 5px; gap: 2px; letter-spacing: .15px; }
.obj em { margin-left: auto; width: 24px; height: 20px; background: #383838; display: flex; align-items: center; justify-content: center; }

.status { height: 28px; display: flex; justify-content: flex-end; align-items: flex-end; }
.status span { width: 34px; height: 28px; border-left: 1px solid #303030; display: flex; align-items: center; justify-content: center; padding-top: 5px; }
.status .ok { width: 33px; padding: 0 5px 5px 0; }

.taskbar { height: 50px; position: relative; display: flex; background: linear-gradient(90deg, #1a1e23 0, #1e2126 60px, #38332d 425px, #2a2321 560px, #2b2120 700px, #43241f 810px, #452722 930px, #38241f 1020px, #2c2523 1100px, #44443e 1190px, #393933 1330px, #232d31 1400px, #262a30 1530px, #30292c 1620px, #4a2220 1740px, #462522 1810px, #2b2326 1919px); color: #fff; font-family: "Open Sans", sans-serif; }
.start { width: 60px; display: flex; align-items: center; justify-content: center; }
.find { width: 360px; background: #333; border: 1px solid #646464; display: flex; align-items: center; padding-left: 14px; gap: 14px; font-size: 18px; color: #d8d8d8; }
.app { width: 62px; display: flex; align-items: center; justify-content: center; position: relative; }
.tv { width: 63px; padding-right: 2px; }
.run::after { content: ""; position: absolute; bottom: 0; left: 5px; right: 6px; height: 3px; background: #76b3ec; }
.stack::after { background: linear-gradient(90deg, #76b3ec 41px, #5a8db8 41px); }
.cur { background: #656661; width: 61px; margin-right: 1px; }
.cur::after { left: 0; right: 0; }
.ya { font: bold 21px "Liberation Sans", sans-serif; fill: #fff; }
.badge { font: 12px "Open Sans", sans-serif; fill: #fff; }
.tray { margin-left: auto; display: flex; align-items: center; height: 50px; padding-right: 20px; }
.eng { font-size: 14.500px; margin-left: -90px; letter-spacing: -.3px; }
.clock { width: 84px; margin-left: 8px; display: flex; flex-direction: column; align-items: center; font-size: 14px; line-height: 23px; letter-spacing: -.35px; }
.note { width: 32px; height: 36px; margin-left: 16px; padding-top: 8px; position: relative; }
.note b { position: absolute; left: 9px; top: 17px; width: 20px; height: 20px; border-radius: 50%; background: #3d3939; border: 1px solid #8a8585; font: 14px/18px "Open Sans", sans-serif; text-align: center; }
.traycloud { position: absolute; left: 1638px; top: 18px; }
.peek { position: absolute; right: 4px; top: 0; width: 1px; height: 50px; background: #777; }

.toast { position: absolute; left: 1445px; top: 852px; width: 455px; height: 164px; background: #292929; color: #fff; font-family: "Open Sans", sans-serif; padding: 24px 30px 0 20px; }
.thead { height: 20px; display: flex; align-items: center; font-size: 15px; }
.thead span { margin: -2px 0 0 10px; letter-spacing: -.35px; }
.x { margin: -3px -1px 0 auto; }
.tbody { display: flex; margin-top: 19px; gap: 20px; }
.tbody > svg { margin-top: 14px; }
.tbody b { display: block; font-size: 17.500px; font-weight: 600; line-height: 25px; letter-spacing: .1px; white-space: nowrap; }
.tbody p { margin: 0; font-size: 17.500px; line-height: 25px; color: #a6a6a6; white-space: nowrap; letter-spacing: .12px; }
.water { position: absolute; left: 1420px; top: 900px; font-family: "Open Sans", sans-serif; fill: #9a9a9a; fill-opacity: .68; }
.w1 { font-size: 24px; }
.w2 { font-size: 16px; }
```
